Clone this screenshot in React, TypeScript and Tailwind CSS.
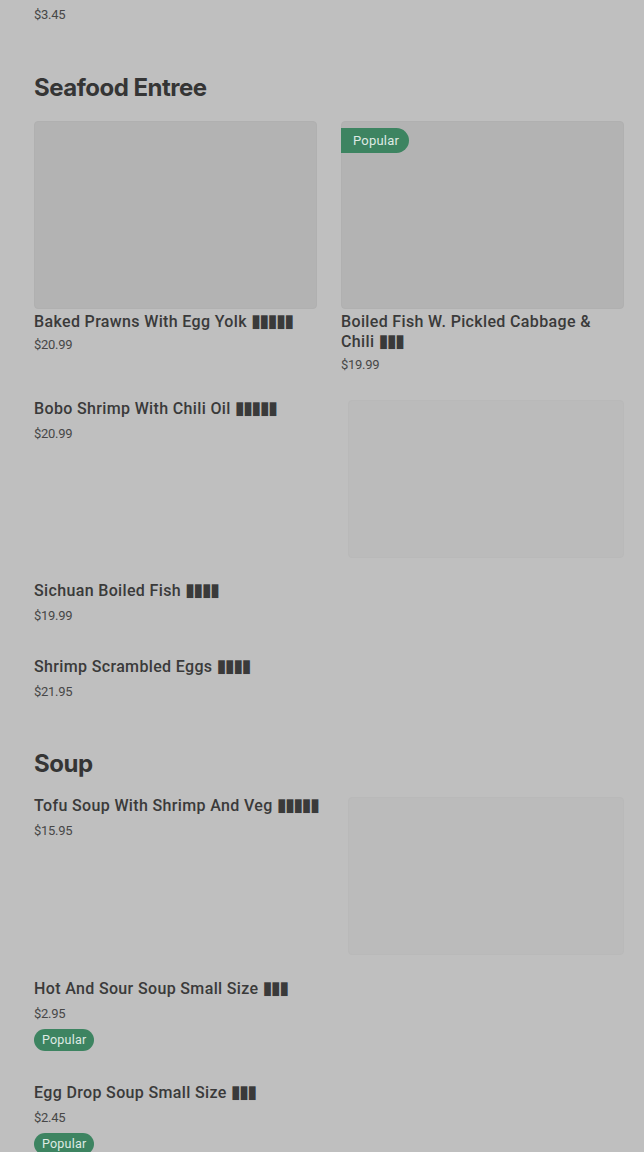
const sans = 'font-["Roboto","Liberation_Sans",sans-serif]';

type Item = { name: string; boxes: number; price: string; popular?: boolean; image?: boolean };

const seafoodGrid: Item[] = [
  { name: 'Baked Prawns With Egg Yolk', boxes: 5, price: '$20.99' },
  { name: 'Boiled Fish W. Pickled Cabbage & Chili', boxes: 3, price: '$19.99', popular: true },
];

const seafoodList: Item[] = [
  { name: 'Bobo Shrimp With Chili Oil', boxes: 5, price: '$20.99', image: true },
  { name: 'Sichuan Boiled Fish', boxes: 4, price: '$19.99' },
  { name: 'Shrimp Scrambled Eggs', boxes: 4, price: '$21.95' },
];

const soupList: Item[] = [
  { name: 'Tofu Soup With Shrimp And Veg', boxes: 5, price: '$15.95', image: true },
  { name: 'Hot And Sour Soup Small Size', boxes: 3, price: '$2.95', popular: true },
  { name: 'Egg Drop Soup Small Size', boxes: 3, price: '$2.45', popular: true },
];

function Title({ item }: { item: Item }) {
  return (
    <h3 className={`${sans} text-[16px] leading-[20px] font-medium tracking-[0.35px] text-[#3a3a3a]`}>
      {item.name}{' '}
      <span className='font-["DejaVu_Sans",sans-serif] text-[18px] leading-[14px] tracking-[-1.6px]'>
        {'▮'.repeat(item.boxes)}
      </span>
    </h3>
  );
}

function Price({ value }: { value: string }) {
  return (
    <p className={`${sans} text-[13px] leading-[18px] text-[#474747] tracking-[-0.3px]`}>{value}</p>
  );
}

function ListItem({ item, last }: { item: Item; last?: boolean }) {
  if (item.image) {
    return (
      <div className={`flex gap-6 ${last ? 'mb-[24px]' : 'mb-[23px]'}`}>
        <div className="flex-1 min-w-0">
          <Title item={item} />
          <div className="mt-[6px]">
            <Price value={item.price} />
          </div>
        </div>
        <div className="w-[276px] h-[158px] mt-[1px] shrink-0 rounded-sm bg-[#bbbbbb] border border-[#b9b9b9]" />
      </div>
    );
  }
  return (
    <div className="mb-[32px]">
      <Title item={item} />
      <div className="mt-[6px]">
        <Price value={item.price} />
      </div>
      {item.popular && (
        <span className={`${sans} inline-flex items-center mt-[6px] h-[22px] px-[8px] rounded-full bg-[#3d8461] text-[12.5px] tracking-[0.2px] text-[#dfeae4]`}>
          Popular
        </span>
      )}
    </div>
  );
}

function SectionHeading({ children }: { children: string }) {
  return (
    <h2 className='font-["Inter",sans-serif] text-[24px] leading-[32px] font-bold tracking-[-0.5px] text-[#353535]'>
      {children}
    </h2>
  );
}

export default function App() {
  return (
    <div className="min-h-[1152px] bg-[#bfbfbf] pl-[34px] pr-[20px] overflow-hidden">
      <div className="pt-[6px]">
        <Price value="$3.45" />
      </div>

      {/* Seafood */}
      <section className="mt-[48px]">
        <SectionHeading>Seafood Entree</SectionHeading>
        <div className="grid grid-cols-2 gap-6 mt-[17px]">
          {seafoodGrid.map((item) => (
            <div key={item.name}>
              <div className="relative h-[188px] rounded-sm bg-[#b3b3b3] border border-[#b0b0b0]">
                {item.popular && (
                  <span className={`${sans} absolute left-[-1px] top-[6px] h-[25px] w-[68px] pl-3 flex items-center rounded-r-full bg-[#3d8461] text-[13px] tracking-[0.2px] text-[#dfeae4]`}>
                    Popular
                  </span>
                )}
              </div>
              <div className="mt-[3px]">
                <Title item={item} />
              </div>
              <div className="mt-[4px]">
                <Price value={item.price} />
              </div>
            </div>
          ))}
        </div>
        <div className="mt-[25px]">
          {seafoodList.map((item) => (
            <ListItem key={item.name} item={item} />
          ))}
        </div>
      </section>

      {/* Soup */}
      <section className="mt-[47px]">
        <SectionHeading>Soup</SectionHeading>
        <div className="mt-[16px]">
          {soupList.map((item) => (
            <ListItem key={item.name} item={item} last />
          ))}
        </div>
      </section>
    </div>
  );
}
